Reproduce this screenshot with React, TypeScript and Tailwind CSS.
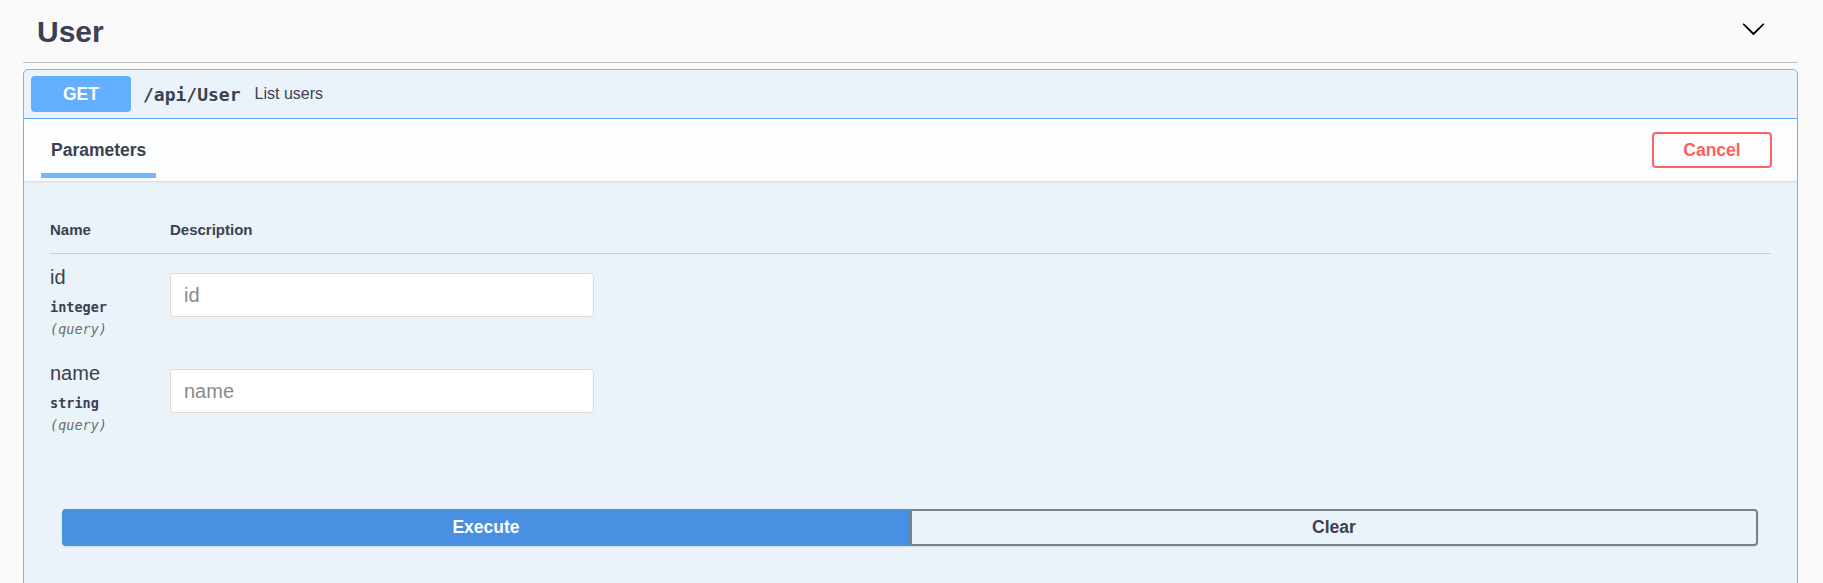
import React from "react";

const sans = { fontFamily: '"Liberation Sans", Arial, sans-serif' };

function ParamRow({ name, type }: { name: string; type: string }) {
  return (
    <div className="flex">
      <div className="w-[120px] shrink-0 pt-[11px] pb-[9px]">
        <div className="text-[20px] leading-[24px] text-[#3b4151]">{name}</div>
        <div className="mt-[7px] text-[13.5px] leading-[22px] font-bold text-[#3b4151] font-['DejaVu_Sans_Mono',monospace]">
          {type}
        </div>
        <div className="text-[13.5px] leading-[23px] italic text-[#6f6f6f] font-['DejaVu_Sans_Mono',monospace]">
          (query)
        </div>
      </div>
      <div className="pt-[19px]">
        <input
          placeholder={name}
          className="w-[424px] h-[44px] bg-white border border-[#d9d9d9] rounded-[4px] pl-[13px] text-[20px] text-[#3b4151] placeholder:text-[#8a8a8a] outline-none font-['Liberation_Sans',Arial,sans-serif]"
        />
      </div>
    </div>
  );
}

export default function App() {
  return (
    <div className="min-h-[583px] bg-[#fafafa] pl-[23px] pr-[25px] text-[#3b4151]" style={sans}>
      {/* Tag header */}
      <div className="h-[63px] flex items-center justify-between border-b border-[#c2c2c2] pl-[14px] pr-[32px]">
        <h3 className="text-[30px] leading-[36px] font-bold text-[#3b4151] pt-[2px]">User</h3>
        <svg width="25" height="25" viewBox="0 0 20 20" className="-mt-[6px]">
          <path
            fill="#000"
            d="M17.418 6.109c.272-.268.709-.268.979 0s.271.701 0 .969l-7.908 7.83c-.27.268-.707.268-.979 0l-7.908-7.83c-.27-.268-.27-.701 0-.969.271-.268.709-.268.979 0L10 13.25l7.418-7.141z"
          />
        </svg>
      </div>

      {/* Opblock */}
      <div className="mt-[6px] border border-[#7db4ea] rounded-[5px] bg-[#ebf3fa] pb-[60px]">
        {/* Summary */}
        <div className="flex items-center pl-[7px] pr-[7px] py-[6px] border-b border-[#61affe]">
          <div className="w-[100px] h-[36px] rounded-[4px] bg-[#61affe] flex items-center justify-center text-white font-bold text-[17.5px]">
            GET
          </div>
          <span className="ml-[12px] font-bold text-[18px] text-[#3b4151] font-['DejaVu_Sans_Mono',monospace]">
            /api/User
          </span>
          <span className="ml-[14px] text-[16px] text-[#3b4151]">List users</span>
        </div>

        {/* Section header */}
        <div className="h-[62px] flex items-start justify-between pl-[17px] pr-[25px] bg-white/80 shadow-[0_1px_2px_rgba(0,0,0,0.1)]">
          <div className="flex flex-col pt-[21px]">
            <div className="px-[10px] text-[17.5px] leading-[20px] font-bold text-[#3b4151]">Parameters</div>
            <div className="mt-[13px] h-[5px] bg-[#61affe] opacity-90"></div>
          </div>
          <button className="mt-[13px] w-[120px] h-[36px] rounded-[4px] border-2 border-[#ff6060] text-[#ff6060] font-bold text-[17.5px] bg-transparent">
            Cancel
          </button>
        </div>

        {/* Parameters table */}
        <div className="pl-[26px] pr-[26px] pt-[29px]">
          <div className="flex pt-[10px] pb-[13px] border-b border-[#c8ced8] text-[15px] leading-[20px] font-bold text-[#3b4151]">
            <div className="w-[120px]">Name</div>
            <div>Description</div>
          </div>
          <ParamRow name="id" type="integer" />
          <ParamRow name="name" type="string" />
        </div>

        {/* Execute */}
        <div className="pl-[38px] pr-[39px] pt-[63px] flex">
          <button className="flex-1 h-[37px] rounded-l-[4px] bg-[#4990e2] border-2 border-[#4990e2] text-white font-bold text-[17.5px] shadow-[0_1px_2px_rgba(0,0,0,0.1)]">
            Execute
          </button>
          <button className="flex-1 h-[37px] rounded-r-[4px] border-2 border-[#808080] text-[#3b4151] font-bold text-[17.5px] bg-transparent shadow-[0_1px_2px_rgba(0,0,0,0.1)]">
            Clear
          </button>
        </div>
      </div>
    </div>
  );
}
